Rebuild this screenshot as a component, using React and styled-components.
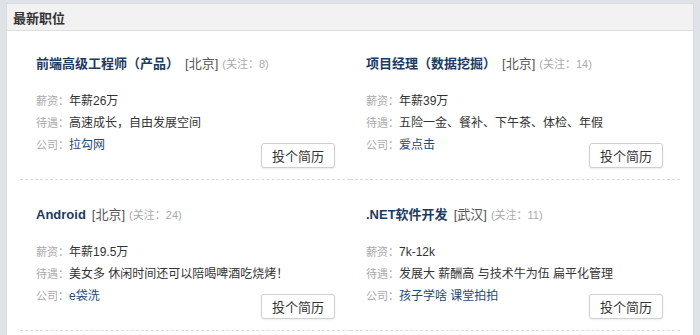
import styled, {createGlobalStyle} from "styled-components";

const GlobalStyle = createGlobalStyle`
  html, body {
    margin: 0;
    padding: 0;
    background-color: #dfe3e7;
    font-family: "Liberation Sans", "Noto Sans CJK SC", sans-serif;
  }
`;

const Page = styled.div`
  padding: 3px 6px 0;
  height: 332px;
`;

const Panel = styled.section`
  background-color: #fff;
  border: 1px solid #d8dcdf;
  border-bottom: none;
  height: 100%;
  box-sizing: border-box;
`;

const PanelHeader = styled.div`
  height: 26px;
  background-color: #f2f2f2;
  border-bottom: 1px solid #dedede;
  padding: 0 6px;
  display: flex;
  align-items: center;
  font-size: 13px;
  font-weight: bold;
  color: #333;
`;

const JobGrid = styled.ul`
  list-style: none;
  margin: 0;
  padding: 0 13px;
  display: grid;
  grid-template-columns: repeat(2, minmax(0, 1fr));
`;

const JobCard = styled.li`
  min-width: 0;
  border-bottom: 1px dashed #dcdcdc;
  padding: ${(p) => (p.$first ? "23px" : "25px")} ${(p) => (p.$right ? "17px" : "15px")} 11px 16px;
  display: flex;
  flex-direction: column;
`;

const TitleRow = styled.div`
  display: flex;
  align-items: baseline;
  height: 20px;
  line-height: 20px;
  white-space: nowrap;
`;

const JobName = styled.a`
  font-size: 13px;
  font-weight: bold;
  color: #1d3a5f;
  text-decoration: none;
  margin-right: 6px;
`;

const City = styled.span`
  font-size: 13px;
  color: #555;
  margin-right: 4px;
`;

const Follow = styled.span`
  font-size: 11px;
  color: #aaa;
`;

const CardBody = styled.div`
  margin-top: 16px;
  display: flex;
  justify-content: space-between;
  align-items: flex-end;
`;

const Details = styled.ul`
  list-style: none;
  margin: 0;
  padding: 0 0 12px;
  min-width: 0;
`;

const DetailRow = styled.li`
  height: 22px;
  line-height: 22px;
  font-size: 12px;
  color: #333;
  white-space: nowrap;

  & label {
    font-size: 11px;
    color: #aaa;
  }
`;

const CompanyLink = styled.a`
  color: #1f4a78;
  text-decoration: none;
`;

const ApplyButton = styled.button`
  flex-shrink: 0;
  width: 74px;
  height: 25px;
  padding: 0;
  background-color: #fff;
  border: 1px solid #cfcfcf;
  border-radius: 3px;
  box-shadow: 0 1px 2px rgba(0, 0, 0, 0.08);
  font-family: inherit;
  font-size: 13px;
  color: #333;
  cursor: pointer;
`;

const jobs = [
  {name: "前端高级工程师（产品）", city: "北京", follow: 8, salary: "年薪26万", perks: "高速成长，自由发展空间", company: "拉勾网"},
  {name: "项目经理（数据挖掘）", city: "北京", follow: 14, salary: "年薪39万", perks: "五险一金、餐补、下午茶、体检、年假", company: "爱点击"},
  {name: "Android", city: "北京", follow: 24, salary: "年薪19.5万", perks: "美女多 休闲时间还可以陪喝啤酒吃烧烤！", company: "e袋洗"},
  {name: ".NET软件开发", city: "武汉", follow: 11, salary: "7k-12k", perks: "发展大 薪酬高 与技术牛为伍 扁平化管理", company: "孩子学啥 课堂拍拍"},
];

function Job({job, index}) {
  return (
    <JobCard $first={index < 2} $right={index % 2 === 1}>
      <TitleRow>
        <JobName href="#">{job.name}</JobName>
        <City>[{job.city}]</City>
        <Follow>(关注：{job.follow})</Follow>
      </TitleRow>
      <CardBody>
        <Details>
          <DetailRow>
            <label>薪资：</label>
            {job.salary}
          </DetailRow>
          <DetailRow>
            <label>待遇：</label>
            {job.perks}
          </DetailRow>
          <DetailRow>
            <label>公司：</label>
            <CompanyLink href="#">{job.company}</CompanyLink>
          </DetailRow>
        </Details>
        <ApplyButton>投个简历</ApplyButton>
      </CardBody>
    </JobCard>
  );
}

export default function App() {
  return (
    <>
      <GlobalStyle />
      <Page>
        <Panel>
          <PanelHeader>最新职位</PanelHeader>
          <JobGrid>
            {jobs.map((job, i) => (
              <Job key={job.name} job={job} index={i} />
            ))}
          </JobGrid>
        </Panel>
      </Page>
    </>
  );
}
